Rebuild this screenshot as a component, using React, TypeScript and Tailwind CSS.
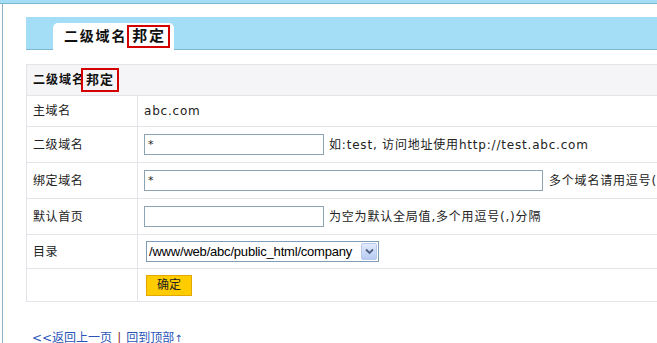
import React from "react";

const font = { fontFamily: '"DejaVu Sans", "Noto Sans CJK SC", sans-serif' };

function Row({ label, h, children }: { label?: string; h: string; children?: React.ReactNode }) {
  return (
    <div className={`flex border-b border-[#e3e3ea] ${h}`}>
      <div className="w-[111px] shrink-0 border-r border-[#e3e3ea] pl-[6px] flex items-center text-[12px] text-[#222] tracking-[0.6px]">
        {label}
      </div>
      <div className="flex-1 flex items-center pl-[6px] text-[12px] text-[#222] tracking-[0.8px]">{children}</div>
    </div>
  );
}

export default function App() {
  return (
    <div className="w-[657px] h-[343px] overflow-hidden bg-white relative" style={font}>
      <div className="h-[3px] bg-[#a5ddf5] border-b border-[#7fb8d4] box-content" />
      <div className="ml-[2px] border-l border-[#8fb3c6] h-[340px] pl-[23px] pt-[13px]">
        {/* tab bar */}
        <div className="h-[33px] bg-[#a3ddf6] border-b border-[#7fb8d4] flex items-end pl-[27px] w-[700px]">
          <div className="h-[27px] w-[121px] bg-white rounded-t-[5px] -mb-px flex items-center pl-[11px] text-[14px] font-bold text-[#111] tracking-[1.8px]">
            <span>二级域名</span>
            <span className="inline-flex items-center h-[23px] border-2 border-[#d40000] pl-[3px] pr-[2px] text-[15px]">邦定</span>
          </div>
        </div>

        {/* table */}
        <div className="mt-[14px] w-[760px] border-l border-t border-[#e3e3ea]">
          <div className="h-[31px] bg-[#f5f5f7] border-b border-[#e3e3ea] flex items-center pl-[6px] text-[12px] font-bold text-[#111] tracking-[1px]">
            <span>二级域名</span>
            <span className="inline-flex items-center h-[24px] border-2 border-[#d40000] -ml-[4px] pl-[3px] pr-[3px] text-[13px]">邦定</span>
          </div>
          <Row label="主域名" h="h-[31px]">
            <span>abc.com</span>
          </Row>
          <Row label="二级域名" h="h-[36px]">
            <div className="w-[180px] h-[21px] border border-[#8ca4b4] text-[11px] pl-[3px] leading-[19px]">*</div>
            <span className="ml-[5px]">如:test, 访问地址使用http://test.abc.com</span>
          </Row>
          <Row label="绑定域名" h="h-[36px]">
            <div className="w-[399px] h-[21px] border border-[#8ca4b4] text-[11px] pl-[3px] leading-[19px]">*</div>
            <span className="ml-[6px] whitespace-nowrap">多个域名请用逗号(,)分隔</span>
          </Row>
          <Row label="默认首页" h="h-[36px]">
            <div className="w-[180px] h-[21px] border border-[#8ca4b4]" />
            <span className="ml-[5px]">为空为默认全局值,多个用逗号(,)分隔</span>
          </Row>
          <Row label="目录" h="h-[34px]">
            <div
              className="ml-[2px] w-[233px] h-[21px] border border-[#7f9db9] flex items-center justify-between pl-[2px] pr-px text-[13px] text-[#000] tracking-normal"
              style={{ fontFamily: '"Liberation Sans", Arial, sans-serif' }}
            >
              <span className="tracking-[-0.2px]">/www/web/abc/public_html/company</span>
              <div className="w-[16px] h-[17px] rounded-[2px] border border-[#b8c9ea] bg-gradient-to-b from-[#e2ebfb] to-[#b7cbf3] flex items-center justify-center">
                <svg width="9" height="7" viewBox="0 0 9 7">
                  <path d="M1 1.5 L4.5 5 L8 1.5" stroke="#4d6185" strokeWidth="1.8" fill="none" />
                </svg>
              </div>
            </div>
          </Row>
          <Row h="h-[33px]">
            <div className="ml-[2px] w-[46px] h-[21px] bg-[#ffcc00] border border-[#e0a800] flex items-center justify-center text-[12px] text-[#222] tracking-normal">
              确定
            </div>
          </Row>
        </div>

        <div className="mt-[27px] text-[12px] flex items-center pl-[6px]">
          <span className="text-[#2a55b8] underline">&lt;&lt;返回上一页</span>
          <span className="mx-[5px] text-[#8b2a2a]">|</span>
          <span className="text-[#2a55b8] underline">回到顶部<span className="text-[10px]">↑</span></span>
        </div>
      </div>
    </div>
  );
}
